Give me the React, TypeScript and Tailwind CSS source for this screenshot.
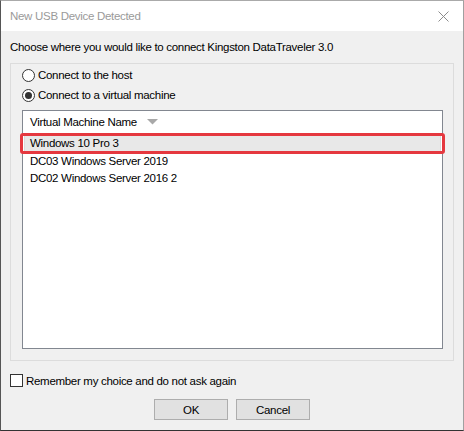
import React from "react";

const font = { fontFamily: '"Liberation Sans", Arial, sans-serif' };

function Radio({ checked, label }: { checked?: boolean; label: string }) {
  return (
    <div className="flex h-[20px] items-center">
      <div className="flex h-[13px] w-[13px] items-center justify-center rounded-full border border-[#333333] bg-white">
        {checked && <div className="h-[7px] w-[7px] rounded-full bg-[#333333]" />}
      </div>
      <span className="ml-[3px] text-black">{label}</span>
    </div>
  );
}

export default function App() {
  return (
    <div
      className="flex h-[431px] w-[464px] flex-col border-b border-l border-r border-t border-b-[#333333] border-l-[#555555] border-r-[#a0a0a0] border-t-[#aaaaaa] bg-[#f0f0f0] text-[11.5px] leading-[16px] tracking-[-0.3px]"
      style={font}
    >
      <div className="flex h-[30px] items-center justify-between bg-white pl-[9px] pr-[14px]">
        <span className="text-[#9a9a9a]">New USB Device Detected</span>
        <svg width="11" height="11" viewBox="0 0 11 11">
          <path d="M0.5 0.5 L10.5 10.5 M10.5 0.5 L0.5 10.5" stroke="#8c8c8c" strokeWidth="1" />
        </svg>
      </div>
      <div className="pl-[9px] pt-[8px] text-black">
        Choose where you would like to connect Kingston DataTraveler 3.0
      </div>
      <div className="ml-[9px] mt-[8px] flex h-[298px] w-[444px] flex-col border border-[#dcdcdc] pl-[11px] pt-[1px]">
        <Radio label="Connect to the host" />
        <Radio checked label="Connect to a virtual machine" />
        <div className="relative mt-[5px] flex h-[239px] w-[421px] flex-col border border-[#828790] bg-white">
          <div className="flex h-[22px] items-center pl-[7px]">
            <span>Virtual Machine Name</span>
            <svg className="ml-[10px]" width="11" height="6" viewBox="0 0 11 6">
              <path d="M0 0 H11 L5.5 5.5 Z" fill="#a8a8a8" />
            </svg>
          </div>
          <div className="mx-[1px] flex h-[19px] items-center border border-[#dadada] bg-[#e8e8e8] pl-[5px]">
            Windows 10 Pro 3
          </div>
          <div className="flex h-[17px] items-center pl-[7px]">DC03 Windows Server 2019</div>
          <div className="flex h-[17px] items-center pl-[7px]">DC02 Windows Server 2016 2</div>
          <div className="pointer-events-none absolute left-[-3px] top-[22px] h-[21px] w-[425px] rounded-[3px] border-[3px] border-[#e5383f]" />
        </div>
      </div>
      <div className="ml-[9px] mt-[13px] flex h-[13px] items-center">
        <div className="h-[13px] w-[13px] border border-[#333333] bg-white" />
        <span className="ml-[3px]">Remember my choice and do not ask again</span>
      </div>
      <div className="mt-[12px] flex justify-center gap-[8px]">
        <button className="flex h-[21px] w-[74px] items-center justify-center border border-[#adadad] bg-[#e1e1e1] text-black">
          OK
        </button>
        <button className="flex h-[21px] w-[74px] items-center justify-center border border-[#adadad] bg-[#e1e1e1] text-black">
          Cancel
        </button>
      </div>
    </div>
  );
}
